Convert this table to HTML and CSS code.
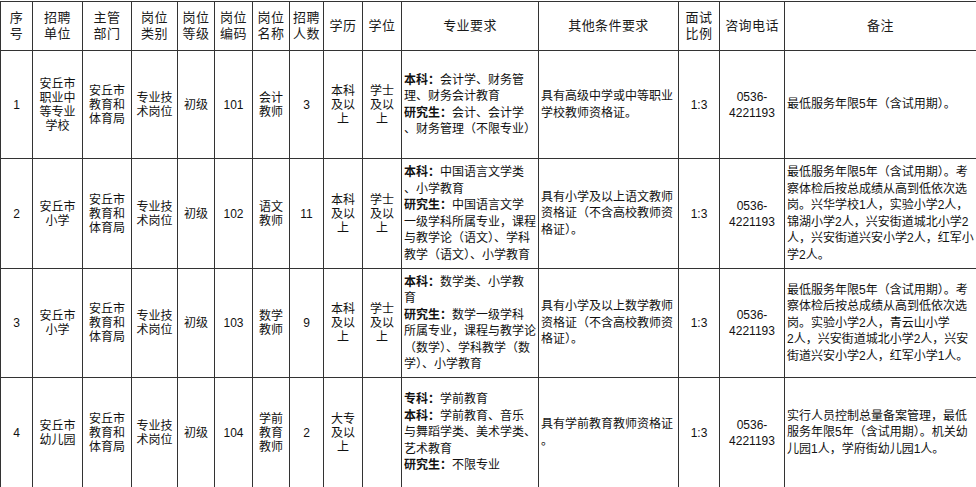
FILE: index.html
```html
<!DOCTYPE html>
<html lang="zh-CN">
<head>
<meta charset="utf-8">
<title>招聘岗位表</title>
<link rel="stylesheet" href="styles.css">
</head>
<body>
<table class="jobs">
  <colgroup>
    <col class="c-no"><col class="c-unit"><col class="c-dept"><col class="c-type"><col class="c-level">
    <col class="c-code"><col class="c-name"><col class="c-count"><col class="c-edu"><col class="c-deg">
    <col class="c-major"><col class="c-other"><col class="c-ratio"><col class="c-tel"><col class="c-note">
  </colgroup>
  <thead>
    <tr class="head">
      <th>序<br>号</th>
      <th>招聘<br>单位</th>
      <th>主管<br>部门</th>
      <th>岗位<br>类别</th>
      <th>岗位<br>等级</th>
      <th>岗位<br>编码</th>
      <th>岗位<br>名称</th>
      <th>招聘<br>人数</th>
      <th>学历</th>
      <th>学位</th>
      <th>专业要求</th>
      <th>其他条件要求</th>
      <th>面试<br>比例</th>
      <th>咨询电话</th>
      <th>备注</th>
    </tr>
  </thead>
  <tbody>
    <tr class="r1">
      <td class="mid">1</td>
      <td class="mid">安丘市<br>职业中<br>等专业<br>学校</td>
      <td class="mid">安丘市<br>教育和<br>体育局</td>
      <td class="mid">专业技<br>术岗位</td>
      <td class="mid">初级</td>
      <td class="mid">101</td>
      <td class="mid">会计<br>教师</td>
      <td class="mid">3</td>
      <td class="mid">本科<br>及以<br>上</td>
      <td class="mid">学士<br>及以<br>上</td>
      <td class="txt"><b>本科：</b>会计学、财务管<br>理、财务会计教育<br><b>研究生：</b>会计、会计学<br>、财务管理（不限专业）</td>
      <td class="txt">具有高级中学或中等职业<br>学校教师资格证。</td>
      <td class="mid">1:3</td>
      <td class="mid tel">0536-<br>4221193</td>
      <td class="txt">最低服务年限5年（含试用期）。</td>
    </tr>
    <tr class="r2">
      <td class="mid">2</td>
      <td class="mid">安丘市<br>小学</td>
      <td class="mid">安丘市<br>教育和<br>体育局</td>
      <td class="mid">专业技<br>术岗位</td>
      <td class="mid">初级</td>
      <td class="mid">102</td>
      <td class="mid">语文<br>教师</td>
      <td class="mid">11</td>
      <td class="mid">本科<br>及以<br>上</td>
      <td class="mid">学士<br>及以<br>上</td>
      <td class="txt"><b>本科：</b>中国语言文学类<br>、小学教育<br><b>研究生：</b>中国语言文学<br>一级学科所属专业，课程<br>与教学论（语文）、学科<br>教学（语文）、小学教育</td>
      <td class="txt">具有小学及以上语文教师<br>资格证（不含高校教师资<br>格证）。</td>
      <td class="mid">1:3</td>
      <td class="mid tel">0536-<br>4221193</td>
      <td class="txt">最低服务年限5年（含试用期）。考<br>察体检后按总成绩从高到低依次选<br>岗。兴华学校1人，实验小学2人，<br>锦湖小学2人，兴安街道城北小学2<br>人，兴安街道兴安小学2人，红军小<br>学2人。</td>
    </tr>
    <tr class="r3">
      <td class="mid">3</td>
      <td class="mid">安丘市<br>小学</td>
      <td class="mid">安丘市<br>教育和<br>体育局</td>
      <td class="mid">专业技<br>术岗位</td>
      <td class="mid">初级</td>
      <td class="mid">103</td>
      <td class="mid">数学<br>教师</td>
      <td class="mid">9</td>
      <td class="mid">本科<br>及以<br>上</td>
      <td class="mid">学士<br>及以<br>上</td>
      <td class="txt"><b>本科：</b>数学类、小学教<br>育<br><b>研究生：</b>数学一级学科<br>所属专业，课程与教学论<br>（数学）、学科教学（数<br>学）、小学教育</td>
      <td class="txt">具有小学及以上数学教师<br>资格证（不含高校教师资<br>格证）。</td>
      <td class="mid">1:3</td>
      <td class="mid tel">0536-<br>4221193</td>
      <td class="txt">最低服务年限5年（含试用期）。考<br>察体检后按总成绩从高到低依次选<br>岗。实验小学2人，青云山小学<br>2人，兴安街道城北小学2人，兴安<br>街道兴安小学2人，红军小学1人。</td>
    </tr>
    <tr class="r4">
      <td class="mid">4</td>
      <td class="mid">安丘市<br>幼儿园</td>
      <td class="mid">安丘市<br>教育和<br>体育局</td>
      <td class="mid">专业技<br>术岗位</td>
      <td class="mid">初级</td>
      <td class="mid">104</td>
      <td class="mid">学前<br>教育<br>教师</td>
      <td class="mid">2</td>
      <td class="mid">大专<br>及以<br>上</td>
      <td class="mid"></td>
      <td class="txt"><b>专科：</b>学前教育<br><b>本科：</b>学前教育、音乐<br>与舞蹈学类、美术学类、<br>艺术教育<br><b>研究生：</b>不限专业</td>
      <td class="txt">具有学前教育教师资格证<br>。</td>
      <td class="mid">1:3</td>
      <td class="mid tel">0536-<br>4221193</td>
      <td class="txt">实行人员控制总量备案管理，最低<br>服务年限5年（含试用期）。机关幼<br>儿园1人，学府街幼儿园1人。</td>
    </tr>
  </tbody>
</table>
</body>
</html>
```

FILE: styles.css
```css
html, body {
  margin: 0;
  padding: 0;
  background: #ffffff;
}

body {
  font-family: "Liberation Sans", "Noto Sans CJK SC", sans-serif;
  color: #111111;
  overflow: hidden;
}

.jobs {
  table-layout: fixed;
  border-collapse: collapse;
  width: 976px;
  margin-top: 1px;
}

.jobs th,
.jobs td {
  border: 1px solid #333333;
  padding: 0 2px;
  vertical-align: middle;
  overflow: hidden;
}

.c-no { width: 32px; }
.c-unit { width: 50px; }
.c-dept { width: 49px; }
.c-type { width: 46px; }
.c-level { width: 37px; }
.c-code { width: 38px; }
.c-name { width: 37px; }
.c-count { width: 34px; }
.c-edu { width: 39px; }
.c-deg { width: 39px; }
.c-major { width: 137px; }
.c-other { width: 140px; }
.c-ratio { width: 41px; }
.c-tel { width: 65px; }
.c-note { width: 192px; }

.head {
  height: 49px;
}

.head th {
  font-weight: normal;
  font-size: 13px;
  line-height: 16px;
  letter-spacing: 0.4px;
  text-align: center;
  color: #1a1a1a;
}

.r1 { height: 108px; }
.r2 { height: 110px; }
.r3 { height: 109px; }
.r4 { height: 110px; }

.mid {
  text-align: center;
  font-size: 12px;
  line-height: 14px;
}

.tel {
  font-size: 12px;
  line-height: 16px;
}

.txt {
  text-align: left;
  font-size: 12px;
  line-height: 16.5px;
  white-space: nowrap;
}

.txt b {
  font-weight: bold;
}
```
